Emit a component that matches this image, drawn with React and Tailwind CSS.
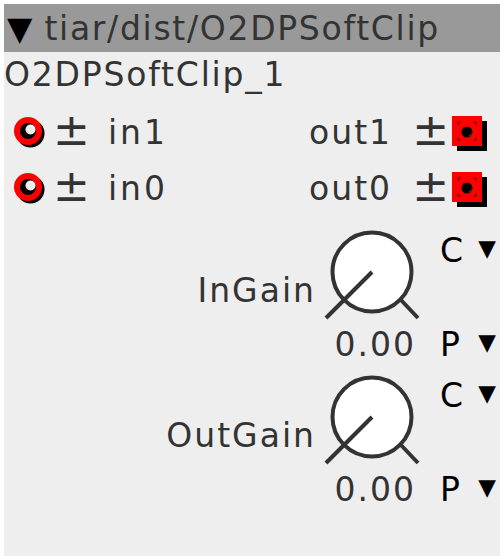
const font = { fontFamily: '"DejaVu Sans", sans-serif' };

function Inlet() {
  return (
    <svg width="36" height="36" viewBox="0 0 36 36" className="shrink-0">
      <circle cx="18.5" cy="18.5" r="11" fill="none" stroke="#000" strokeWidth="6" />
      <circle cx="16" cy="16" r="11" fill="#000" stroke="#ff0000" strokeWidth="6" />
      <circle cx="18.5" cy="14.5" r="5" fill="#eeeeee" />
    </svg>
  );
}

function Outlet() {
  return (
    <svg width="38" height="38" viewBox="0 0 38 38" className="shrink-0">
      <rect x="5" y="5" width="30" height="30" fill="#000" />
      <rect x="0" y="0" width="30" height="30" fill="#ff0000" />
      <circle cx="15" cy="16" r="5.5" fill="#000" />
      <path d="M15.5 20.5 A5 5 0 0 0 19.5 16 A4 4 0 0 1 15.5 20.5 Z" fill="#fff" />
      <path d="M6 9 V6 H9 M21 6 H24 V9 M24 21 V24 H21 M9 24 H6 V21" stroke="#600" strokeWidth="1.2" fill="none" />
    </svg>
  );
}

function Knob() {
  return (
    <svg width="100" height="100" viewBox="0 0 100 100">
      <circle cx="50" cy="50" r="39.5" fill="#fff" stroke="#333" strokeWidth="4" />
      <line x1="50" y1="50" x2="4" y2="96" stroke="#333" strokeWidth="4" />
      <line x1="79" y1="78" x2="96" y2="96" stroke="#333" strokeWidth="4" />
    </svg>
  );
}

function IoRow({ inName, outName }) {
  return (
    <div className="flex h-[56px] items-center">
      <div className="ml-[8px] mt-[2px]">
        <Inlet />
      </div>
      <span className="ml-[5px] -mt-[4px] text-[44px] leading-none text-[#333]">±</span>
      <span className="ml-[18px] leading-none tracking-[3px] text-[#333]">{inName}</span>
      <span className="ml-auto leading-none tracking-[2px] text-[#333]">{outName}</span>
      <span className="ml-[20px] -mt-[4px] text-[44px] leading-none text-[#333]">±</span>
      <div className="ml-[3px] mt-[5px] mr-[10px]">
        <Outlet />
      </div>
    </div>
  );
}

function KnobRow({ label }) {
  return (
    <div className="flex h-[145px]">
      <div className="mr-[2px] flex-1 pt-[58px] text-right leading-none tracking-[2px] text-[#333]">{label}</div>
      <div className="ml-[4px] flex w-[100px] flex-col">
        <div className="mt-[6px]">
          <Knob />
        </div>
        <div className="mt-[6px] pr-[6px] text-right leading-none tracking-[2px] text-[#333]">0.00</div>
      </div>
      <div className="ml-[18px] mr-[4px] flex w-[56px] flex-col">
        <div className="mt-[18px] flex items-start leading-none text-black">
          <span>C</span>
          <span className="ml-auto mt-[3px] text-[23px] leading-none">▼</span>
        </div>
        <div className="mt-[61px] flex items-start leading-none text-black">
          <span>P</span>
          <span className="ml-auto mt-[3px] text-[23px] leading-none">▼</span>
        </div>
      </div>
    </div>
  );
}

export default function App() {
  return (
    <div className="h-[560px] w-[504px] bg-white p-[4px]" style={font}>
      <div className="flex h-[552px] w-[496px] flex-col bg-[#eeeeee] text-[33px]">
        <div className="flex h-[48px] items-center bg-[#999999] pl-[3px] leading-none">
          <span className="text-black">▼</span>
          <span className="ml-[12px] tracking-[1.7px] text-[#333]">tiar/dist/O2DPSoftClip</span>
        </div>
        <div className="h-[52px] pl-[0px] pt-[6px] leading-none tracking-[1.8px] text-[#333]">O2DPSoftClip_1</div>
        <IoRow inName="in1" outName="out1" />
        <IoRow inName="in0" outName="out0" />
        <KnobRow label="InGain" />
        <KnobRow label="OutGain" />
      </div>
    </div>
  );
}
